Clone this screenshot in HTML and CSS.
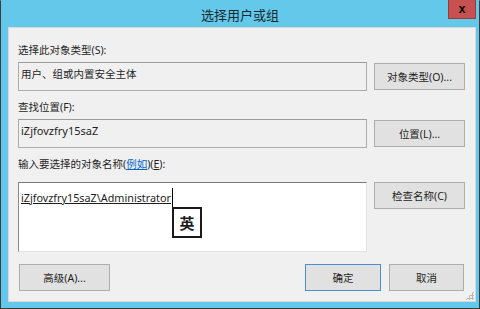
FILE: index.html
```html
<!DOCTYPE html>
<html lang="zh-CN">
<head>
    <meta charset="UTF-8">
    <meta name="viewport" content="width=device-width, initial-scale=1.0">
    <title>选择用户或组</title>
    <link rel="stylesheet" href="styles.css">
</head>
<body>
    <div class="window">
        <div class="titlebar">
            <span class="title">选择用户或组</span>
            <button class="close">x</button>
        </div>
        <div class="client">
            <div class="label first">选择此对象类型(S):</div>
            <div class="row">
                <div class="field disabled">用户、组或内置安全主体</div>
                <button class="btn">对象类型(O)...</button>
            </div>

            <div class="label">查找位置(F):</div>
            <div class="row">
                <div class="field disabled latin">iZjfovzfry15saZ</div>
                <button class="btn">位置(L)...</button>
            </div>

            <div class="label last">输入要选择的对象名称(<a href="#" class="link">例如</a>)(<u>E</u>):</div>
            <div class="row top">
                <div class="field names">
                    <span class="entry">iZjfovzfry15saZ\Administrator</span><span class="caret"></span>
                    <!-- input method indicator -->
                    <div class="ime">英</div>
                </div>
                <button class="btn">检查名称(C)</button>
            </div>

            <div class="footer">
                <button class="btn">高级(A)...</button>
                <button class="btn ok">确定</button>
                <button class="btn cancel">取消</button>
            </div>
            <div class="grip"></div>
        </div>
    </div>
</body>
</html>
```

FILE: styles.css
```css
*{
    margin: 0;
    padding: 0;
    box-sizing: border-box;
}
body{
    width: 480px;
    height: 309px;
    overflow: hidden;
    font-family: "Noto Sans", "Noto Sans CJK SC", sans-serif;
    font-size: 10.5px;
    color: #1e1e1e;
}
.window{
    width: 480px;
    height: 309px;
    background-color: #63c8ea;
    border: 1px solid #3b3b3b;
    border-top-color: #63c8ea;
    display: flex;
    flex-direction: column;
}
.titlebar{
    height: 26px;
    display: flex;
    align-items: center;
    justify-content: center;
    position: relative;
}
.title{
    font-family: "Noto Sans CJK SC", sans-serif;
    font-size: 13px;
    color: #1b2a30;
}
.close{
    position: absolute;
    top: -1px;
    right: 3px;
    width: 28px;
    height: 19px;
    background-color: #c75050;
    border: 1px solid #9a3b3b;
    border-top: none;
    font-family: "Liberation Sans", sans-serif;
    font-weight: bold;
    font-size: 12px;
    line-height: 15px;
    color: #000000;
}
.client{
    flex: 1;
    margin: 0 3px 6px 7px;
    background-color: #f0f0f0;
    border: 1px solid #d9d9d9;
    padding: 14px 10px 10px 9px;
    position: relative;
}
.label{
    height: 16px;
    line-height: 16px;
    margin-top: 8px;
    margin-bottom: 4px;
}
.label.first{
    margin-top: 0;
}
.label.last{
    margin-bottom: 10px;
}
.link{
    color: #0066cc;
}
.row{
    display: flex;
    align-items: center;
    gap: 7px;
}
.row.top{
    align-items: flex-start;
}
.field{
    width: 349px;
    height: 29px;
    border: 1px solid #acacac;
    border-top-color: #9c9c9c;
    padding: 3px 2px;
    line-height: 16px;
}
.field.disabled{
    background-color: #f0f0f0;
}
.field.latin{
    font-size: 11px;
}
.field.names{
    height: 70px;
    background-color: #ffffff;
    border-color: #e3e3e3;
    border-top-color: #7a7a7a;
    border-left-color: #8a8a8a;
    padding: 7px 2px;
    position: relative;
    display: flex;
    align-items: flex-start;
    font-size: 10.8px;
}
.entry{
    text-decoration: underline;
}
.caret{
    width: 1px;
    height: 19px;
    margin-top: -2px;
    margin-left: 1px;
    background-color: #000000;
}
.ime{
    position: absolute;
    left: 153px;
    top: 24px;
    width: 30px;
    height: 31px;
    background-color: #ffffff;
    border: 2px solid #1a1a1a;
    font-family: "Noto Sans CJK SC", sans-serif;
    font-weight: bold;
    font-size: 15px;
    line-height: 27px;
    text-align: center;
}
.btn{
    width: 91px;
    height: 27px;
    flex-shrink: 0;
    background-color: #e1e1e1;
    border: 1px solid #adadad;
    font-family: "Noto Sans", "Noto Sans CJK SC", sans-serif;
    font-size: 10.5px;
    color: #1e1e1e;
}
.footer{
    display: flex;
    gap: 8px;
    margin-top: 12px;
    padding-left: 1px;
    padding-right: 1px;
}
.footer .ok{
    margin-left: auto;
    width: 76px;
    border-color: #4a8fd6;
}
.footer .cancel{
    width: 75px;
}
.grip{
    position: absolute;
    right: 1px;
    bottom: 1px;
    width: 9px;
    height: 9px;
    background-image: radial-gradient(circle, #b9b9b9 1px, transparent 1.2px);
    background-size: 3px 3px;
    clip-path: polygon(100% 0, 100% 100%, 0 100%);
}
```
